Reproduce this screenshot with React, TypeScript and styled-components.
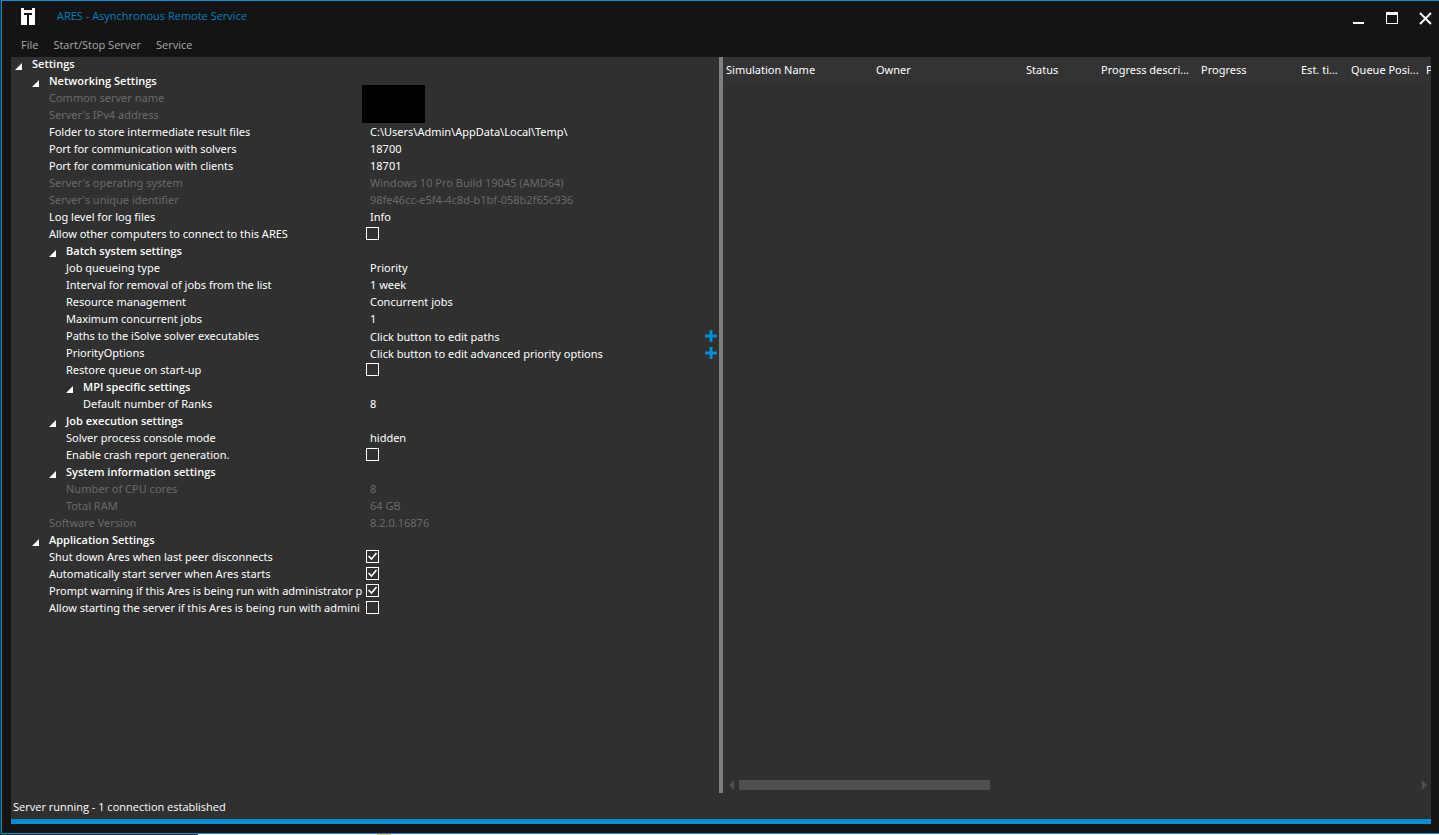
import React, { useState } from "react";
import styled, { createGlobalStyle, css } from "styled-components";

const Global = createGlobalStyle`
  * { box-sizing: border-box; }
  body { margin: 0; background: #2c2f33; }
  button, input { font: inherit; color: inherit; }
`;

const Desktop = styled.div`
  min-height: 100vh;
  padding: 0 0 1px 1px;
  display: flex;
  background: linear-gradient(
    90deg,
    #2c2f33 198px,
    #ffffff 198px 377px,
    #e8d060 377px 391px,
    #ffffff 391px
  );
  font-family: "Noto Sans", "Open Sans", sans-serif;
  font-size: 11px;
  line-height: 13px;
  color: #ffffff;
`;

const Window = styled.main`
  flex: 1;
  min-width: 0;
  display: flex;
  flex-direction: column;
  background: #141414;
  border: 1px solid #008fd5;
  border-right: 0;
  padding: 0 8px 9px 9px;
`;

const TitleBar = styled.header`
  height: 30px;
  display: flex;
  align-items: center;
  padding-left: 10px;
`;

const Title = styled.h1`
  flex: 1;
  margin: 0 0 0 22px;
  padding-bottom: 2px;
  font-family: "Open Sans", "Noto Sans", sans-serif;
  font-size: 11px;
  font-weight: 400;
  color: #0080bf;
`;

const WindowButtons = styled.div`
  display: flex;
  gap: 20px;
  margin: 4px -2px 0 0;
`;

const WindowButton = styled.button`
  width: 14px;
  height: 14px;
  padding: 0;
  border: 0;
  background: none;
  display: flex;
`;

const MenuBar = styled.nav`
  height: 26px;
  display: flex;
  align-items: center;
  gap: 15px;
  padding-left: 10px;
  font-family: "Open Sans", "Noto Sans", sans-serif;
  color: #a8a8a8;
`;

const MenuItem = styled.button`
  padding: 1px 0 0;
  border: 0;
  background: none;
`;

const Body = styled.div`
  flex: 1;
  min-height: 0;
  background: #303030;
  display: grid;
  grid-template-columns: minmax(0, 1fr) 4px minmax(0, 1fr);
`;

const Divider = styled.div`
  background: #808080;
`;

const Settings = styled.section`
  position: relative;
`;

const Row = styled.div<{ $muted?: boolean }>`
  display: grid;
  grid-template-columns: 351px minmax(0, 1fr);
  height: 17px;
  color: ${(p) => (p.$muted ? "#6a6a6a" : "#ffffff")};
`;

const indent = css<{ $level: number }>`
  padding-left: ${(p) => p.$level * 17 + 4}px;
`;

const GroupToggle = styled.button<{ $level: number }>`
  ${indent}
  border: 0;
  padding-top: 0;
  padding-bottom: 4px;
  background: none;
  display: flex;
  align-items: center;
  gap: 10px;
  font-family: "Open Sans", "Noto Sans", sans-serif;
  font-weight: 600;
  text-align: left;
  white-space: nowrap;
`;

const Arrow = styled.svg<{ $open: boolean }>`
  width: 7px;
  height: 7px;
  margin-top: 5px;
  flex: none;
  transform: rotate(${(p) => (p.$open ? 0 : -45)}deg);
`;

const Label = styled.label<{ $level: number }>`
  ${indent}
  white-space: nowrap;
`;

const Value = styled.div`
  display: flex;
  justify-content: space-between;
  padding: 0 2px 2px 8px;
  white-space: nowrap;
`;

const TextInput = styled.input`
  width: 100%;
  height: 17px;
  margin: -2px 0;
  padding: 0;
  border: 0;
  outline: 0;
  background: none;
  line-height: 17px;
`;

const CheckCell = styled.div`
  padding-left: 4px;
`;

const CheckBox = styled.input`
  appearance: none;
  display: block;
  width: 13px;
  height: 13px;
  margin: 0;
  border: 1px solid #ffffff;
  &:checked {
    background: url("data:image/svg+xml,%3Csvg xmlns='http://www.w3.org/2000/svg' viewBox='0 0 11 11'%3E%3Cpath d='M1.500 5l3 3L9.500 2' fill='none' stroke='white' stroke-width='1.600'/%3E%3C/svg%3E");
  }
`;

const AddButton = styled.button`
  width: 12px;
  height: 12px;
  margin-top: 1px;
  padding: 0;
  border: 0;
  background: none;
  display: flex;
`;

const ActionText = styled.span`
  padding-top: 1px;
`;

const Redaction = styled.div`
  position: absolute;
  left: 351px;
  top: 28px;
  width: 63px;
  height: 38px;
  background: #000000;
`;

const Jobs = styled.section`
  display: flex;
  flex-direction: column;
  justify-content: space-between;
  overflow: hidden;
`;

const JobTable = styled.table`
  width: 100%;
  table-layout: fixed;
  border-collapse: collapse;
`;

const HeadCell = styled.th<{ $width?: number }>`
  width: ${(p) => (p.$width ? `${p.$width}px` : "auto")};
  height: 25px;
  padding: 0 0 0 3px;
  background: #333333;
  box-shadow: inset -1px 0 #303030;
  font-weight: 400;
  text-align: left;
  white-space: nowrap;
  overflow: hidden;
`;

const ScrollBar = styled.div`
  height: 16px;
  display: flex;
  align-items: center;
  padding: 0 4px 0 6px;
`;

const ScrollButton = styled.button`
  width: 5px;
  height: 10px;
  padding: 0;
  border: 0;
  background: none;
  display: flex;
`;

const Track = styled.div`
  flex: 1;
  padding: 0 5px;
`;

const Thumb = styled.div`
  width: 37%;
  height: 10px;
  background: #4f4f4f;
`;

const StatusBar = styled.footer`
  height: 31px;
  padding: 7px 2px 0;
  background: #303030;
  border-bottom: 5px solid #008fd5;
  font-family: "Open Sans", "Noto Sans", sans-serif;
`;

type Entry = {
  level: number;
  name: string;
  kind: "group" | "text" | "fixed" | "check" | "action";
  value?: string;
  on?: boolean;
};

const entries: Entry[] = [
  { level: 0, name: "Settings", kind: "group" },
  { level: 1, name: "Networking Settings", kind: "group" },
  { level: 2, name: "Common server name", kind: "fixed" },
  { level: 2, name: "Server's IPv4 address", kind: "fixed" },
  { level: 2, name: "Folder to store intermediate result files", kind: "text", value: "C:\\Users\\Admin\\AppData\\Local\\Temp\\" },
  { level: 2, name: "Port for communication with solvers", kind: "text", value: "18700" },
  { level: 2, name: "Port for communication with clients", kind: "text", value: "18701" },
  { level: 2, name: "Server's operating system", kind: "fixed", value: "Windows 10 Pro Build 19045 (AMD64)" },
  { level: 2, name: "Server's unique identifier", kind: "fixed", value: "98fe46cc-e5f4-4c8d-b1bf-058b2f65c936" },
  { level: 2, name: "Log level for log files", kind: "text", value: "Info" },
  { level: 2, name: "Allow other computers to connect to this ARES", kind: "check" },
  { level: 2, name: "Batch system settings", kind: "group" },
  { level: 3, name: "Job queueing type", kind: "text", value: "Priority" },
  { level: 3, name: "Interval for removal of jobs from the list", kind: "text", value: "1 week" },
  { level: 3, name: "Resource management", kind: "text", value: "Concurrent jobs" },
  { level: 3, name: "Maximum concurrent jobs", kind: "text", value: "1" },
  { level: 3, name: "Paths to the iSolve solver executables", kind: "action", value: "Click button to edit paths" },
  { level: 3, name: "PriorityOptions", kind: "action", value: "Click button to edit advanced priority options" },
  { level: 3, name: "Restore queue on start-up", kind: "check" },
  { level: 3, name: "MPI specific settings", kind: "group" },
  { level: 4, name: "Default number of Ranks", kind: "text", value: "8" },
  { level: 2, name: "Job execution settings", kind: "group" },
  { level: 3, name: "Solver process console mode", kind: "text", value: "hidden" },
  { level: 3, name: "Enable crash report generation.", kind: "check" },
  { level: 2, name: "System information settings", kind: "group" },
  { level: 3, name: "Number of CPU cores", kind: "fixed", value: "8" },
  { level: 3, name: "Total RAM", kind: "fixed", value: "64 GB" },
  { level: 2, name: "Software Version", kind: "fixed", value: "8.2.0.16876" },
  { level: 1, name: "Application Settings", kind: "group" },
  { level: 2, name: "Shut down Ares when last peer disconnects", kind: "check", on: true },
  { level: 2, name: "Automatically start server when Ares starts", kind: "check", on: true },
  { level: 2, name: "Prompt warning if this Ares is being run with administrator p", kind: "check", on: true },
  { level: 2, name: "Allow starting the server if this Ares is being run with admini", kind: "check" },
];

const columns: { name: string; width?: number }[] = [
  { name: "Simulation Name", width: 150 },
  { name: "Owner", width: 150 },
  { name: "Status", width: 75 },
  { name: "Progress descri...", width: 100 },
  { name: "Progress", width: 100 },
  { name: "Est. ti...", width: 50 },
  { name: "Queue Posi...", width: 75 },
  { name: "P" },
];

function Cell({ entry, id }: { entry: Entry; id: string }) {
  if (entry.kind === "check") {
    return (
      <CheckCell>
        <CheckBox id={id} type="checkbox" defaultChecked={entry.on} />
      </CheckCell>
    );
  }
  if (entry.kind === "text") {
    return (
      <Value>
        <TextInput id={id} type="text" defaultValue={entry.value} spellCheck={false} />
      </Value>
    );
  }
  if (entry.kind === "action") {
    return (
      <Value>
        <ActionText>{entry.value}</ActionText>
        <AddButton id={id} type="button">
          <svg width="12" height="12" viewBox="0 0 12 12">
            <path d="M6 0v12M0 6h12" stroke="#008fd5" strokeWidth="3" />
          </svg>
        </AddButton>
      </Value>
    );
  }
  return (
    <Value>
      <output id={id}>{entry.value}</output>
    </Value>
  );
}

function SettingsTree() {
  const [closed, setClosed] = useState<number[]>([]);
  const toggle = (i: number) =>
    setClosed((c) => (c.includes(i) ? c.filter((n) => n !== i) : [...c, i]));
  let hiddenBelow = Infinity;

  return (
    <Settings>
      {entries.map((entry, i) => {
        if (entry.level > hiddenBelow) return null;
        hiddenBelow = closed.includes(i) ? entry.level : Infinity;
        const id = `setting-${i}`;
        if (entry.kind === "group") {
          return (
            <Row key={id}>
              <GroupToggle
                type="button"
                $level={entry.level}
                aria-expanded={!closed.includes(i)}
                onClick={() => toggle(i)}
              >
                <Arrow $open={!closed.includes(i)} viewBox="0 0 7 7">
                  <path d="M7 0v7H0z" fill="#ffffff" />
                </Arrow>
                {entry.name}
              </GroupToggle>
            </Row>
          );
        }
        return (
          <Row key={id} $muted={entry.kind === "fixed"}>
            <Label $level={entry.level} htmlFor={id}>{entry.name}</Label>
            <Cell entry={entry} id={id} />
          </Row>
        );
      })}
      {closed.length === 0 && <Redaction />}
    </Settings>
  );
}

export default function App() {
  return (
    <Desktop>
      <Global />
      <Window>
        <TitleBar>
          <svg width="14" height="17" viewBox="0 0 14 17" aria-hidden="true">
            <path d="M0 0h3v2h8V0h3v17H8V7h3V5H3v2h3v10H0z" fill="#ffffff" />
          </svg>
          <Title>ARES - Asynchronous Remote Service</Title>
          <WindowButtons>
            <WindowButton type="button" aria-label="Minimize">
              <svg width="14" height="14" viewBox="0 0 14 14">
                <path d="M2 11h11v2H2z" fill="#ffffff" />
              </svg>
            </WindowButton>
            <WindowButton type="button" aria-label="Maximize">
              <svg width="14" height="14" viewBox="0 0 14 14">
                <path d="M1 1h12v12H1zM2 4v8h10V4z" fill="#ffffff" fillRule="evenodd" />
              </svg>
            </WindowButton>
            <WindowButton type="button" aria-label="Close">
              <svg width="14" height="14" viewBox="0 0 14 14">
                <path d="M1 2l11 11M12 2L1 13" stroke="#ffffff" strokeWidth="2" />
              </svg>
            </WindowButton>
          </WindowButtons>
        </TitleBar>
        <MenuBar>
          <MenuItem type="button">File</MenuItem>
          <MenuItem type="button">Start/Stop Server</MenuItem>
          <MenuItem type="button">Service</MenuItem>
        </MenuBar>
        <Body>
          <SettingsTree />
          <Divider />
          <Jobs>
            <JobTable>
              <thead>
                <tr>
                  {columns.map((c) => (
                    <HeadCell key={c.name} $width={c.width} scope="col">{c.name}</HeadCell>
                  ))}
                </tr>
              </thead>
            </JobTable>
            <ScrollBar>
              <ScrollButton type="button" aria-label="Scroll left">
                <svg width="5" height="10" viewBox="0 0 5 10"><path d="M5 0v10L0 5z" fill="#4f4f4f" /></svg>
              </ScrollButton>
              <Track><Thumb /></Track>
              <ScrollButton type="button" aria-label="Scroll right">
                <svg width="5" height="10" viewBox="0 0 5 10"><path d="M0 0v10l5-5z" fill="#4f4f4f" /></svg>
              </ScrollButton>
            </ScrollBar>
          </Jobs>
        </Body>
        <StatusBar>Server running - 1 connection established</StatusBar>
      </Window>
    </Desktop>
  );
}
